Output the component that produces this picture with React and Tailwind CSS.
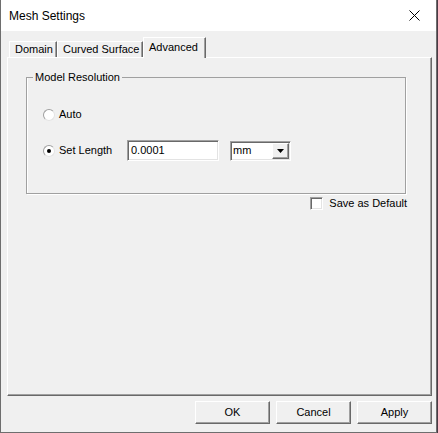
const sunken =
  "border border-t-[#a0a0a0] border-l-[#a0a0a0] border-r-white border-b-white shadow-[inset_1px_1px_0_#696969,inset_-1px_-1px_0_#e3e3e3]";
const raised =
  "border border-t-white border-l-white border-r-[#696969] border-b-[#696969] shadow-[inset_-1px_-1px_0_#a0a0a0]";

function Tab({ label, width, active }) {
  return (
    <div
      className={`flex items-start bg-[#f0f0f0] border border-b-0 border-t-white border-l-white border-r-[#696969] shadow-[inset_-1px_0_0_#a0a0a0] ${width} ${
        active
          ? "h-[21px] -mb-px relative z-10 pl-[5px] pt-[3px]"
          : "h-[16px] pl-[5px] pt-px"
      }`}
    >
      {label}
    </div>
  );
}

function Radio({ checked, label }) {
  return (
    <div className="flex items-center gap-[4px]">
      <span className="w-[12px] h-[12px] rounded-full bg-white border border-t-[#a0a0a0] border-l-[#a0a0a0] border-r-[#e3e3e3] border-b-[#e3e3e3] flex items-center justify-center">
        {checked && <span className="w-[4px] h-[4px] rounded-full bg-black" />}
      </span>
      <span>{label}</span>
    </div>
  );
}

function Button({ children }) {
  return (
    <button
      className={`w-[75px] h-[23px] bg-[#f0f0f0] text-center ${raised}`}
    >
      {children}
    </button>
  );
}

export default function App() {
  return (
    <div className="w-[438px] h-[433px] bg-[#4b3a45] font-['Liberation_Sans',Arial,sans-serif] text-[11px] leading-[13px] text-black">
      <div className="w-[437px] h-[433px] bg-[#f0f0f0] border-x border-b border-[#6e6e6e] flex flex-col">
        {/* title bar */}
        <div className="h-[31px] bg-white flex items-center justify-between pl-[8px] pr-[16px] shrink-0">
          <span className="text-[12px] leading-[16px]">Mesh Settings</span>
          <svg width="11" height="11" viewBox="0 0 11 11" className="text-black">
            <path d="M0.5 0.5L10.5 10.5M10.5 0.5L0.5 10.5" stroke="currentColor" strokeWidth="1" />
          </svg>
        </div>

        <div className="flex flex-col pt-[6px] pl-[6px]">
          {/* tab strip */}
          <div className="flex items-end h-[20px] ml-[2px]">
            <Tab label="Domain" width="w-[48px]" />
            <Tab label="Curved Surface" width="w-[86px]" />
            <Tab label="Advanced" width="w-[63px]" active />
          </div>

          {/* tab page */}
          <div className={`w-[425px] h-[339px] bg-[#f0f0f0] pt-[12px] pl-[18px] ${raised}`}>
            <fieldset className="w-[380px] border border-[#a0a0a0] pl-[6px] pt-[20px] pb-[32px] shadow-[1px_1px_0_#fff,inset_1px_0_0_#fff]">
              <legend className="px-[2px] leading-[14px]">Model Resolution</legend>
              <div className="ml-[10px] flex flex-col gap-[15px]">
                <div className="h-[21px] flex items-center">
                  <Radio label="Auto" />
                </div>
                <div className="h-[21px] flex items-center">
                  <div className="w-[84px]">
                    <Radio label="Set Length" checked />
                  </div>
                  <div className={`w-[92px] h-[21px] bg-white flex items-center pl-[3px] ${sunken}`}>
                    0.0001
                  </div>
                  <div className={`ml-[11px] w-[61px] h-[20px] bg-white flex items-center justify-between pl-[2px] pr-px ${sunken}`}>
                    <span>mm</span>
                    <span className={`w-[17px] h-[16px] bg-[#f0f0f0] flex items-center justify-center ${raised}`}>
                      <svg width="7" height="4" viewBox="0 0 7 4">
                        <path d="M0 0H7L3.5 4Z" fill="#000" />
                      </svg>
                    </span>
                  </div>
                </div>
              </div>
            </fieldset>

            <div className="w-[381px] mt-[3px] flex items-center justify-end gap-[6px]">
              <span className={`w-[13px] h-[13px] bg-white ${sunken}`} />
              <span>Save as Default</span>
            </div>
          </div>

          {/* dialog buttons */}
          <div className="w-[425px] mt-[5px] flex justify-end gap-[6px]">
            <Button>OK</Button>
            <Button>Cancel</Button>
            <Button>Apply</Button>
          </div>
        </div>
      </div>
    </div>
  );
}
